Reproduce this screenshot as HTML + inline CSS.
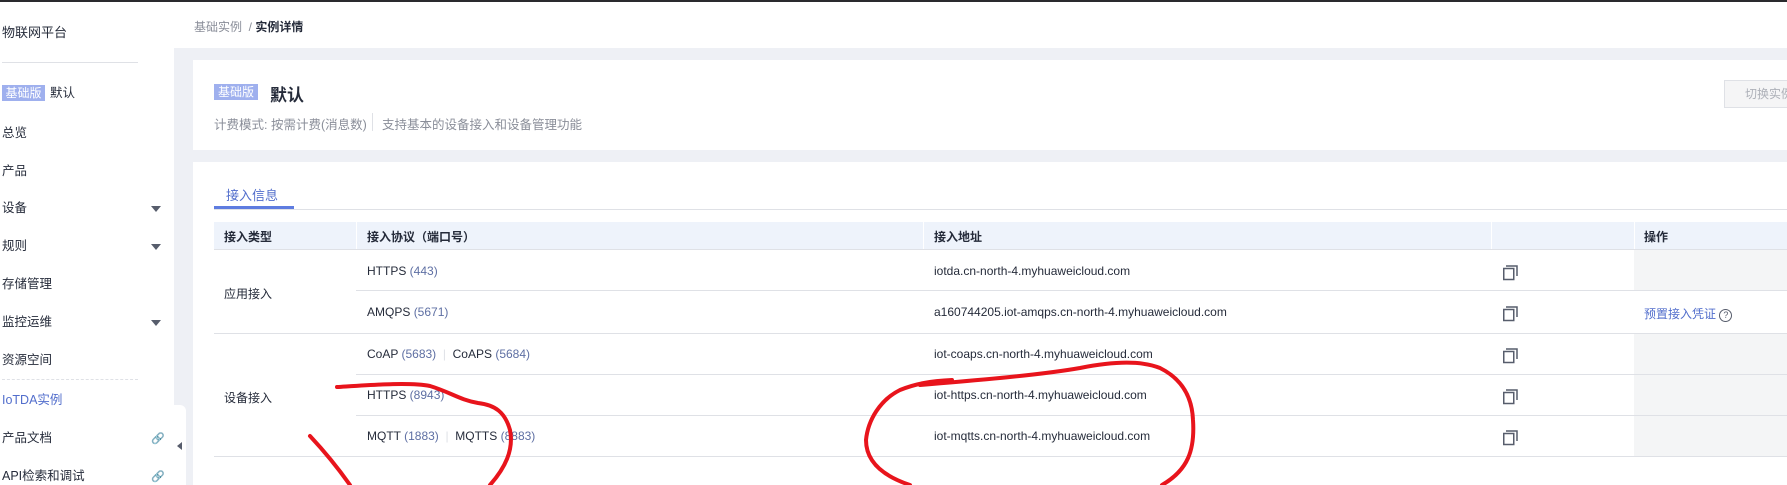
<!DOCTYPE html>
<html><head><meta charset="utf-8"><style>
*{margin:0;padding:0;box-sizing:border-box}
body{width:1787px;height:485px;overflow:hidden;background:#eef0f5;font-family:"Liberation Sans","Noto Sans CJK SC",sans-serif;font-size:12px;color:#252b3a;position:relative}
.a{position:absolute;white-space:nowrap}
.side{left:0;top:0;width:174px;height:485px;background:#fff}
.mi{left:2px;font-size:12.5px;line-height:16px;color:#252b3a}
.arr{left:151px;width:0;height:0;border-left:5px solid transparent;border-right:5px solid transparent;border-top:6px solid #575d6c}
.hl{height:1px;background:#dfe1e6}
.port{color:#5e6fa3}
</style></head><body>
<div class="a side"></div>
<div class="a mi" style="top:25px;font-size:13px">物联网平台</div>
<div class="a hl" style="left:2px;top:62px;width:136px"></div>
<div class="a" style="left:2px;top:85px;width:43px;height:16px;background:#9fb0ee;color:#fff;font-size:12px;line-height:16px;text-align:center">基础版</div>
<div class="a mi" style="left:50px;top:85px">默认</div>
<div class="a mi" style="top:125px">总览</div>
<div class="a mi" style="top:163px">产品</div>
<div class="a mi" style="top:200px">设备</div><div class="a arr" style="top:206px"></div>
<div class="a mi" style="top:238px">规则</div><div class="a arr" style="top:244px"></div>
<div class="a mi" style="top:276px">存储管理</div>
<div class="a mi" style="top:314px">监控运维</div><div class="a arr" style="top:320px"></div>
<div class="a mi" style="top:352px">资源空间</div>
<div class="a" style="left:2px;top:379px;width:136px;border-top:1px dashed #dfe1e6"></div>
<div class="a mi" style="top:392px;color:#526ecc">IoTDA实例</div>
<div class="a mi" style="top:430px">产品文档</div>
<div class="a mi" style="top:468px">API检索和调试</div>
<div class="a" style="left:151px;top:432px;color:#8a8e99;font-size:11px">&#128279;</div>
<div class="a" style="left:151px;top:470px;color:#8a8e99;font-size:11px">&#128279;</div>
<div class="a" style="left:174px;top:405px;width:12px;height:80px;background:#fff;border-radius:0 6px 0 0"></div>
<div class="a" style="left:177px;top:442px;width:0;height:0;border-top:4px solid transparent;border-bottom:4px solid transparent;border-right:5px solid #575d6c"></div>
<!-- header -->
<div class="a" style="left:174px;top:2px;width:1613px;height:46px;background:#fff"></div>
<div class="a" style="left:194px;top:18px;color:#8a8e99;font-size:12px">基础实例 &nbsp;/ <b style="color:#252b3a">实例详情</b></div>
<!-- card1 -->
<div class="a" style="left:193px;top:60px;width:1594px;height:90px;background:#fff"></div>
<div class="a" style="left:214px;top:84px;width:44px;height:16px;background:#9fb0ee;color:#fff;line-height:16px;text-align:center;font-size:12px">基础版</div>
<div class="a" style="left:270px;top:81px;font-size:17px;font-weight:bold">默认</div>
<div class="a" style="left:214px;top:114px;color:#8a8e99;font-size:12.5px">计费模式: 按需计费(消息数)</div>
<div class="a" style="left:372px;top:113px;width:1px;height:18px;background:#dfe1e6"></div>
<div class="a" style="left:382px;top:114px;color:#8a8e99;font-size:12.5px">支持基本的设备接入和设备管理功能</div>
<div class="a" style="left:1724px;top:80px;width:80px;height:28px;border:1px solid #dfe1e6;background:#f5f5f6;color:#adb0b8;font-size:12px;line-height:26px;padding-left:20px">切换实例</div>
<!-- card2 -->
<div class="a" style="left:193px;top:162px;width:1594px;height:323px;background:#fff"></div>
<div class="a" style="left:226px;top:185px;color:#526ecc;font-size:13px">接入信息</div>
<div class="a hl" style="left:214px;top:209px;width:1573px"></div>
<div class="a" style="left:214px;top:206px;width:80px;height:3px;background:#5e7ce0"></div>
<div class="a" style="left:214px;top:222px;width:1573px;height:28px;background:#eef3fb"></div>
<div class="a" style="left:356px;top:222px;width:1px;height:28px;background:#fff"></div>
<div class="a" style="left:923px;top:222px;width:1px;height:28px;background:#fff"></div>
<div class="a" style="left:1491px;top:222px;width:1px;height:28px;background:#fff"></div>
<div class="a" style="left:1634px;top:222px;width:1px;height:28px;background:#fff"></div>
<div class="a" style="left:224px;top:228px;font-weight:bold;font-size:12px">接入类型</div>
<div class="a" style="left:367px;top:228px;font-weight:bold;font-size:12px">接入协议（端口号）</div>
<div class="a" style="left:934px;top:228px;font-weight:bold;font-size:12px">接入地址</div>
<div class="a" style="left:1644px;top:228px;font-weight:bold;font-size:12px">操作</div>
<div class="a hl" style="left:214px;top:249px;width:1573px"></div>
<div class="a" style="left:1634px;top:250px;width:153px;height:40px;background:#f4f5f6"></div>
<div class="a" style="left:1634px;top:334px;width:153px;height:122px;background:#f4f5f6"></div>
<div class="a hl" style="left:356px;top:290px;width:1431px"></div>
<div class="a hl" style="left:214px;top:333px;width:1573px"></div>
<div class="a hl" style="left:356px;top:374px;width:1431px"></div>
<div class="a hl" style="left:356px;top:415px;width:1431px"></div>
<div class="a hl" style="left:214px;top:456px;width:1573px"></div>
<div class="a" style="left:224px;top:285px">应用接入</div>
<div class="a" style="left:224px;top:389px">设备接入</div>
<div class="a" style="left:367px;top:264px">HTTPS <span class="port">(443)</span></div>
<div class="a" style="left:367px;top:305px">AMQPS <span class="port">(5671)</span></div>
<div class="a" style="left:367px;top:347px">CoAP <span class="port">(5683)</span> <span style="color:#dfe1e6">&nbsp;|&nbsp;</span> CoAPS <span class="port">(5684)</span></div>
<div class="a" style="left:367px;top:388px">HTTPS <span class="port">(8943)</span></div>
<div class="a" style="left:367px;top:429px">MQTT <span class="port">(1883)</span> <span style="color:#dfe1e6">&nbsp;|&nbsp;</span> MQTTS <span class="port">(8883)</span></div>
<div class="a" style="left:934px;top:264px">iotda.cn-north-4.myhuaweicloud.com</div>
<div class="a" style="left:934px;top:305px">a160744205.iot-amqps.cn-north-4.myhuaweicloud.com</div>
<div class="a" style="left:934px;top:347px">iot-coaps.cn-north-4.myhuaweicloud.com</div>
<div class="a" style="left:934px;top:388px">iot-https.cn-north-4.myhuaweicloud.com</div>
<div class="a" style="left:934px;top:429px">iot-mqtts.cn-north-4.myhuaweicloud.com</div>
<div class="a" style="left:1644px;top:305px;color:#526ecc">预置接入凭证 <span style="display:inline-block;width:13px;height:13px;border:1px solid #575d6c;border-radius:50%;font-size:9px;line-height:11px;text-align:center;color:#575d6c">?</span></div>
<svg class="a" style="left:0;top:0" width="1787" height="485">
<g fill="none" stroke="#575d6c" stroke-width="1.5">
<g transform="translate(1503,264)"><rect x="0.75" y="4.5" width="10" height="11"/><path d="M3 2H14V12"/></g>
<g transform="translate(1503,305)"><rect x="0.75" y="4.5" width="10" height="11"/><path d="M3 2H14V12"/></g>
<g transform="translate(1503,347)"><rect x="0.75" y="4.5" width="10" height="11"/><path d="M3 2H14V12"/></g>
<g transform="translate(1503,388)"><rect x="0.75" y="4.5" width="10" height="11"/><path d="M3 2H14V12"/></g>
<g transform="translate(1503,429)"><rect x="0.75" y="4.5" width="10" height="11"/><path d="M3 2H14V12"/></g>
</g>
<g fill="none" stroke="#e8141c" stroke-width="4" stroke-linecap="round" stroke-linejoin="round">
<path d="M337 387 C370 385 410 382 430 386 C450 392 460 400 478 403 C495 405 505 412 510 430 C514 450 505 468 490 485"/>
<path d="M310 436 C325 452 338 468 350 485"/>
<path d="M952 380 C930 381 915 384 900 390 C880 400 868 420 866 440 C866 460 880 475 910 485"/>
<path d="M920 385 C980 380 1040 375 1080 368 C1110 362 1140 360 1160 368 C1180 378 1192 395 1193 420 C1195 450 1188 470 1162 485"/>
</g>
</svg>
<div class="a" style="left:0;top:0;width:1787px;height:2px;background:#2a2a2e"></div>
</body></html>
